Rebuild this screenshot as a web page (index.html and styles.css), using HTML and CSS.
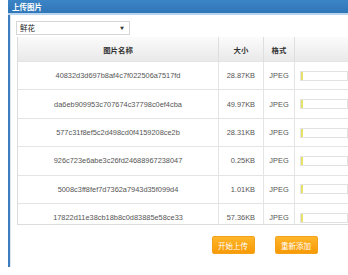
FILE: index.html
```html
<!DOCTYPE html>
<html lang="zh">
<head>
  <meta charset="UTF-8">
  <title>上传图片</title>
  <link rel="stylesheet" href="styles.css">
</head>
<body>
  <div class="panel">
    <div class="panel-head">上传图片</div>
    <div class="panel-body">
      <div class="select">鲜花<span class="arrow">▼</span></div>

      <div class="table-wrap">
        <table>
          <thead>
            <tr>
              <th class="c-name">图片名称</th>
              <th class="c-size">大小</th>
              <th class="c-type">格式</th>
              <th class="c-prog">进度</th>
              <th>操作</th>
            </tr>
          </thead>
          <tbody>
            <tr><td>40832d3d697b8af4c7f022506a7517fd</td><td class="num">28.87KB</td><td>JPEG</td><td class="prog"><span class="bar"><i></i></span>0%</td><td></td></tr>
            <tr><td>da6eb909953c707674c37798c0ef4cba</td><td class="num">49.97KB</td><td>JPEG</td><td class="prog"><span class="bar"><i></i></span>0%</td><td></td></tr>
            <tr><td>577c31f8ef5c2d498cd0f4159208ce2b</td><td class="num">28.31KB</td><td>JPEG</td><td class="prog"><span class="bar"><i></i></span>0%</td><td></td></tr>
            <tr><td>926c723e6abe3c26fd24688967238047</td><td class="num">0.25KB</td><td>JPEG</td><td class="prog"><span class="bar"><i></i></span>0%</td><td></td></tr>
            <tr><td>5008c3ff8fef7d7362a7943d35f099d4</td><td class="num">1.01KB</td><td>JPEG</td><td class="prog"><span class="bar"><i></i></span>0%</td><td></td></tr>
            <tr><td>17822d11e38cb18b8c0d83885e58ce33</td><td class="num">57.36KB</td><td>JPEG</td><td class="prog"><span class="bar"><i></i></span>0%</td><td></td></tr>
          </tbody>
        </table>
      </div>

      <div class="actions">
        <button>开始上传</button>
        <button>重新添加</button>
      </div>
    </div>
  </div>
</body>
</html>
```

FILE: styles.css
```css
body {
  margin: 0;
  overflow: hidden;
  background: #fff;
  font-family: Arial, "Liberation Sans", "Noto Sans CJK SC", sans-serif;
}
.panel {
  margin-left: 8px;
  width: 513px;
}
.panel-head {
  height: 13px;
  line-height: 13px;
  padding-left: 4px;
  background: linear-gradient(#3b84c6, #2f76b8);
  color: #fff;
  font-family: "Noto Sans CJK SC", sans-serif;
  font-weight: bold;
  font-size: 7.5px;
  border-bottom: 2px solid #b9d5ee;
}
.panel-body {
  border-left: 2px solid #3d7dc0;
  border-right: 2px solid #3d7dc0;
  box-shadow: inset 1px 0 0 #dde6ee;
  padding: 6px 6px 0;
  height: 246px;
}
.select {
  width: 109px;
  height: 12px;
  line-height: 12px;
  border: 1px solid #d6d6d6;
  padding: 0 0 0 3px;
  font-family: "Noto Sans CJK SC", sans-serif;
  font-size: 7.5px;
  color: #222;
  display: flex;
  justify-content: space-between;
}
.arrow {
  font-size: 4px;
  width: 9px;
  color: #333;
}
.table-wrap {
  margin: 2px 0 0 1px;
  height: 187px;
  overflow: hidden;
  border-left: 1px solid #dcdcdc;
  border-bottom: 1px solid #dcdcdc;
}
table {
  border-collapse: collapse;
  width: 494px;
  table-layout: fixed;
  font-size: 7.4px;
  color: #555;
}
th {
  height: 24px;
  padding: 0;
  background: linear-gradient(#fbfbfb, #e9e9e9);
  border-right: 1px solid #dedede;
  font-family: "Noto Sans CJK SC", sans-serif;
  font-weight: bold;
  color: #333;
}
td {
  height: 27.4px;
  padding: 0;
  text-align: center;
  border-right: 1px solid #e4e4e4;
  border-top: 1px solid #e4e4e4;
}
.c-name { width: 200px; }
.c-size { width: 44px; }
.c-type { width: 30px; }
.c-prog { width: 126px; }
.num { text-align: right; padding-right: 8px; }
.prog {
  text-align: left;
  padding-left: 5px;
  color: #888;
  white-space: nowrap;
}
.bar {
  display: inline-block;
  vertical-align: middle;
  width: 46px;
  height: 8px;
  border: 1px solid #e2e2e2;
  margin-right: 2px;
}
.bar i {
  display: block;
  width: 2px;
  height: 8px;
  background: #e6e26a;
}
.actions {
  display: flex;
  justify-content: center;
  gap: 20px;
  margin-top: 11px;
}
button {
  width: 43px;
  height: 18px;
  padding: 0;
  border: 1px solid #f3a21a;
  border-radius: 2px;
  background: linear-gradient(#ffb52a, #f79a06);
  color: #fff;
  font-family: "Noto Sans CJK SC", sans-serif;
  font-size: 7.5px;
}
```
